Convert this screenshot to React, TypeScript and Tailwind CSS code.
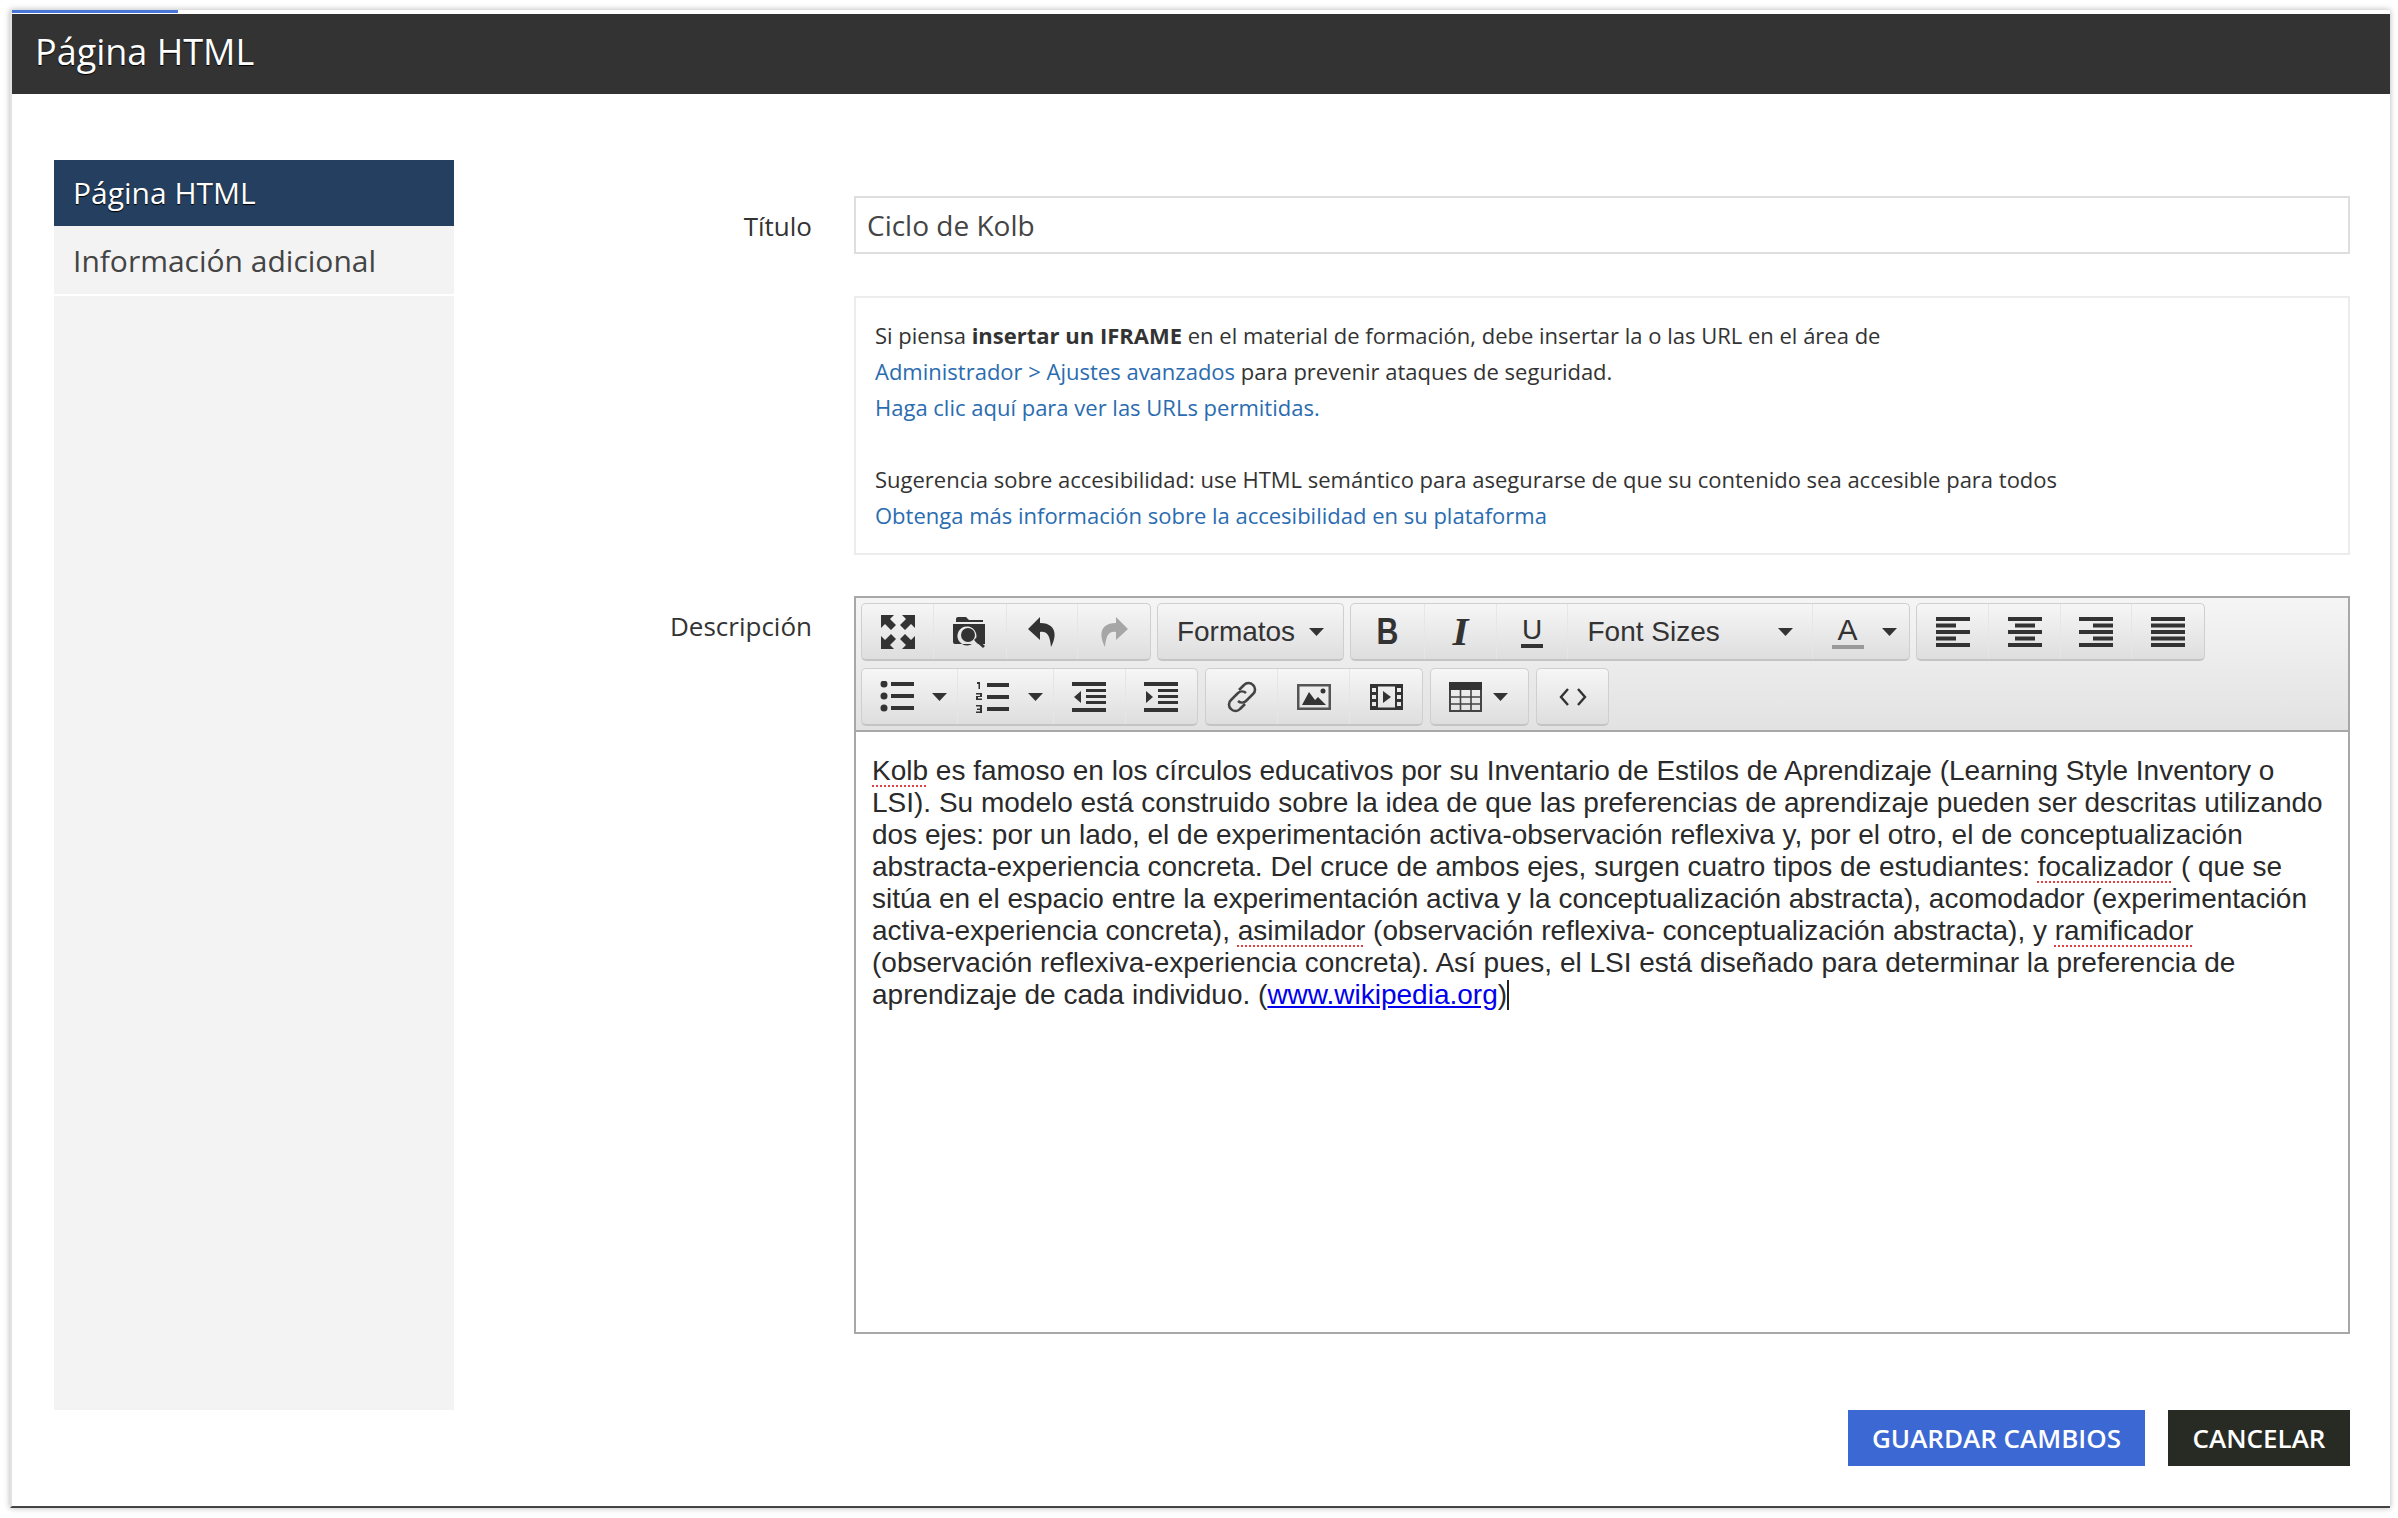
import React from "react";

const Caret: React.FC = () => (
    <svg width="15" height="8" viewBox="0 0 15 8" className="shrink-0"><path d="M0 0h15L7.5 8z" fill="#333" /></svg>
);

const Ico: React.FC<{ w?: number; h?: number; children: React.ReactNode; fill?: string }> = ({ w = 34, h = 32, children, fill = "#333" }) => (
    <svg width={w} height={h} viewBox={`0 0 ${w} ${h}`} fill={fill} className="shrink-0">{children}</svg>
);

const Fullscreen = () => (
    <Ico h={34}>
        <path d="M0 0h13l-4 4 6 6-5 5-6-6-4 4z" />
        <path d="M34 0H21l4 4-6 6 5 5 6-6 4 4z" />
        <path d="M0 34h13l-4-4 6-6-5-5-6 6-4-4z" />
        <path d="M34 34H21l4-4-6-6 5-5 6 6 4-4z" />
    </Ico>
);

const Browse = () => (
    <Ico>
        <path d="M3 6V3q0-2 2-2h8l3 3h14v2z" />
        <path fillRule="evenodd" d="M0 8h32v20h-7l-3-3a9.5 9.5 0 1 0-3 3H2q-2 0-2-2zM15 12a7 7 0 1 1 0 14 7 7 0 0 1 0-14z" />
        <path d="M21 24l2-2 9 8-2 2z" />
    </Ico>
);

const Undo = () => (
    <Ico w={28}>
        <path d="M12 1 0 13l12 11v-8c6-1 10 2 11 15 7-13 4-24-11-24z" />
    </Ico>
);

const Redo = () => (
    <Ico w={28} fill="#a6a6a6">
        <path d="M16 1 28 13 16 24v-8C10 15 6 18 5 31-2 18 1 7 16 7z" />
    </Ico>
);

const Align: React.FC<{ rows: [number, number][] }> = ({ rows }) => (
    <Ico h={30}>
        {rows.map(([x, w], i) => <rect key={i} x={x} y={i * 6.5} width={w} height="4" />)}
    </Ico>
);

const Bullets = () => (
    <Ico>
        {[3, 15, 27].map((y) => (
            <g key={y}>
                <circle cx="4" cy={y} r="3.5" />
                <rect x="11" y={y - 2} width="23" height="4" />
            </g>
        ))}
    </Ico>
);

const Numbers = () => (
    <Ico>
        <path d="M1 1h3v7H2.500V3H1zM0 12h6v4H2v1.500h4V19H0v-4h4v-1.500H0zM0 24h6v8H0v-1.500h4V29H1v-1.500h3v-2H0z" />
        {[4, 16, 28].map((y) => <rect key={y} x="11" y={y - 2} width="22" height="4" />)}
    </Ico>
);

const Outdent = () => (
    <Ico h={30}>
        <rect width="34" height="4" />
        <rect x="14" y="7" width="20" height="3" />
        <rect x="14" y="13" width="20" height="3" />
        <rect x="14" y="19" width="20" height="3" />
        <rect y="26" width="34" height="4" />
        <path d="M9 9v12L2 15z" />
    </Ico>
);

const Indent = () => (
    <Ico h={30}>
        <rect width="34" height="4" />
        <rect x="14" y="7" width="20" height="3" />
        <rect x="14" y="13" width="20" height="3" />
        <rect x="14" y="19" width="20" height="3" />
        <rect y="26" width="34" height="4" />
        <path d="M2 9v12l7-6z" />
    </Ico>
);

const LinkIco = () => (
    <svg width="34" height="34" viewBox="0 0 34 34" fill="none" stroke="#444" strokeWidth="2.6" className="shrink-0">
        <path d="M14 10l5-5a6 6 0 0 1 9 0 6 6 0 0 1 0 9l-7 7a6 6 0 0 1-8 0" />
        <path d="M20 24l-5 5a6 6 0 0 1-9 0 6 6 0 0 1 0-9l7-7a6 6 0 0 1 8 0" />
    </svg>
);

const ImageIco = () => (
    <Ico h={26} fill="#333">
        <path fillRule="evenodd" fill="#555" d="M0 0h34v26H0zM2.500 2.500v21h29v-21z" />
        <path d="M5 21l7-13 6 8 3-3 8 8z" />
        <circle cx="26" cy="7" r="2.500" />
    </Ico>
);

const Media = () => (
    <Ico w={33} h={26}>
        <path fillRule="evenodd" d="M0 0h33v26H0zM8 2.500v21h17v-21zM2 4v4h4V4zM2 11v4h4v-4zM2 18v4h4v-4zM27 4v4h4V4zM27 11v4h4v-4zM27 18v4h4v-4z" />
        <path d="M13 7v12l8-6z" />
    </Ico>
);

const TableIco = () => (
    <svg width="33" height="30" viewBox="0 0 33 30" fill="none" stroke="#444" strokeWidth="1.6" className="shrink-0">
        <rect x="1" y="1" width="31" height="28" strokeWidth="2" />
        <rect x="0" y="0" width="33" height="8" fill="#333" stroke="none" />
        <path d="M1 15h31M1 22h31M11.500 8v21M22 8v21" />
    </svg>
);

const CodeIco = () => (
    <svg width="28" height="20" viewBox="0 0 28 20" fill="none" stroke="#333" strokeWidth="2.4" className="shrink-0">
        <path d="M9 2 2 10l7 8M19 2l7 8-7 8" />
    </svg>
);

const Btn: React.FC<{ w: string; last?: boolean; gap?: string; children: React.ReactNode }> = ({ w, last, gap = "gap-[14px]", children }) => (
    <div className={`${w} h-full flex items-center justify-center ${gap} ${last ? "" : "border-r border-[#e6e6e6]"}`}>{children}</div>
);

const Group: React.FC<{ children: React.ReactNode }> = ({ children }) => (
    <div className="flex h-[58px] rounded-[5px] border border-[#cfcfcf] border-b-2 border-b-[#c4c4c4] bg-gradient-to-b from-[#f6f6f6] to-[#dedede]">{children}</div>
);

const Field: React.FC<{ label: string; children: React.ReactNode; labelClass: string }> = ({ label, children, labelClass }) => (
    <div className="flex">
        <label className={`w-[400px] shrink-0 pr-[42px] text-right text-[26px] text-[#333] ${labelClass}`}>{label}</label>
        <div className="w-[1496px]">{children}</div>
    </div>
);

const Misspelled: React.FC<{ children: React.ReactNode }> = ({ children }) => (
    <span className="underline decoration-dotted decoration-2 decoration-[#e04040] underline-offset-[5px]">{children}</span>
);

const ALeft: [number, number][] = [[0, 34], [0, 20], [0, 34], [0, 20], [0, 34]];
const ACenter: [number, number][] = [[0, 34], [7, 20], [0, 34], [7, 20], [0, 34]];
const ARight: [number, number][] = [[0, 34], [14, 20], [0, 34], [14, 20], [0, 34]];
const AFull: [number, number][] = [[0, 34], [0, 34], [0, 34], [0, 34], [0, 34]];

export default function App() {
    return (
        <div className="min-h-screen bg-white pl-[10px] pt-[10px] font-['Open_Sans',sans-serif]">
            <div className="w-[2380px] h-[1498px] bg-white border-l-[2px] border-[#e2e2e2] border-b-[2px] border-b-[#444] shadow-[0_0_6px_rgba(0,0,0,0.3)]">
                <div className="h-[4px]">
                    <div className="h-[3px] w-[166px] bg-[#4a78d8]" />
                </div>
                <div className="h-[80px] bg-[#333333] flex items-center pl-[23px] pb-[4px] text-[36px] text-white [text-shadow:0_1px_1px_#000]">
                    Página HTML
                </div>

                <div className="flex pl-[42px] pt-[66px]">
                    {/* side nav */}
                    <div className="w-[400px] h-[1250px] bg-[#f3f3f3] text-[30px] shrink-0">
                        <div className="h-[66px] bg-[#243f60] text-white flex items-center pl-[19px] pb-[2px] [text-shadow:0_1px_1px_#000]">Página HTML</div>
                        <div className="mt-[1px] h-[69px] flex items-center pl-[19px] text-[#444] border-b-[2px] border-white">Información adicional</div>
                    </div>

                    <div className="pt-[36px] flex flex-col">
                        <Field label="Título" labelClass="pt-[11px]">
                            <div className="h-[58px] border-[2px] border-[#dedede] flex items-center pl-[11px] text-[28px] text-[#444]">Ciclo de Kolb</div>
                        </Field>

                        <div className="mt-[42px]">
                            <Field label="" labelClass="">
                                <div className="h-[259px] border-[2px] border-[#ececec] pt-[19px] pl-[19px] text-[22px] leading-[36px] text-[#333]">
                                    <p>Si piensa <b>insertar un IFRAME</b> en el material de formación, debe insertar la o las URL en el área de</p>
                                    <p><a className="text-[#2b6cb0]">Administrador &gt; Ajustes avanzados</a> para prevenir ataques de seguridad.</p>
                                    <p><a className="text-[#2b6cb0]">Haga clic aquí para ver las URLs permitidas.</a></p>
                                    <p className="mt-[36px]">Sugerencia sobre accesibilidad: use HTML semántico para asegurarse de que su contenido sea accesible para todos</p>
                                    <p><a className="text-[#2b6cb0]">Obtenga más información sobre la accesibilidad en su plataforma</a></p>
                                </div>
                            </Field>
                        </div>

                        <div className="mt-[41px]">
                            <Field label="Descripción" labelClass="pt-[11px]">
                                <div className="h-[738px] border-[2px] border-[#a8a8a8] flex flex-col font-['Liberation_Sans',sans-serif]">
                                    <div className="h-[134px] shrink-0 border-b-[2px] border-[#a8a8a8] bg-gradient-to-b from-[#f5f5f5] to-[#e2e2e2] pl-[5px] pt-[5px] flex flex-col gap-[7px] text-[28px] text-[#333]">
                                        <div className="flex gap-[6px]">
                                            <Group>
                                                <Btn w="w-[72px]"><Fullscreen /></Btn>
                                                <Btn w="w-[73px]"><Browse /></Btn>
                                                <Btn w="w-[71px]"><Undo /></Btn>
                                                <Btn w="w-[72px]" last><Redo /></Btn>
                                            </Group>
                                            <Group>
                                                <Btn w="w-[185px]" last>Formatos <Caret /></Btn>
                                            </Group>
                                            <Group>
                                                <Btn w="w-[74px]"><span className="text-[37px] font-bold scale-x-[0.82]">B</span></Btn>
                                                <Btn w="w-[72px]"><span className="text-[41px] italic font-bold font-['Liberation_Serif',serif]">I</span></Btn>
                                                <Btn w="w-[71px]"><span className="text-[28px] leading-[28px] px-[1px] border-b-[4px] border-[#333]">U</span></Btn>
                                                <Btn w="w-[245px]"><span className="w-[176px]">Font Sizes</span><Caret /></Btn>
                                                <Btn w="w-[96px]" gap="gap-[18px] pl-[6px]" last><span className="w-[32px] text-center text-[30px] leading-[30px] border-b-[4px] border-[#999]">A</span><Caret /></Btn>
                                            </Group>
                                            <Group>
                                                <Btn w="w-[72px]"><Align rows={ALeft} /></Btn>
                                                <Btn w="w-[72px]"><Align rows={ACenter} /></Btn>
                                                <Btn w="w-[71px]"><Align rows={ARight} /></Btn>
                                                <Btn w="w-[72px]" last><Align rows={AFull} /></Btn>
                                            </Group>
                                        </div>
                                        <div className="flex gap-[7px]">
                                            <Group>
                                                <Btn w="w-[96px]" gap="gap-[18px] pl-[8px]"><Bullets /><Caret /></Btn>
                                                <Btn w="w-[96px]" gap="gap-[18px] pl-[8px]"><Numbers /><Caret /></Btn>
                                                <Btn w="w-[72px]" gap="pr-[2px]"><Outdent /></Btn>
                                                <Btn w="w-[71px]" gap="pr-[2px]" last><Indent /></Btn>
                                            </Group>
                                            <Group>
                                                <Btn w="w-[72px]"><LinkIco /></Btn>
                                                <Btn w="w-[72px]"><ImageIco /></Btn>
                                                <Btn w="w-[72px]" last><Media /></Btn>
                                            </Group>
                                            <Group>
                                                <Btn w="w-[97px]" last gap="gap-[11px] pr-[2px]"><TableIco /><Caret /></Btn>
                                            </Group>
                                            <Group>
                                                <Btn w="w-[71px]" last><CodeIco /></Btn>
                                            </Group>
                                        </div>
                                    </div>
                                    <div className="bg-white pt-[23px] pl-[16px] text-[28px] leading-[32px] text-[#2a2a2a]">
                                        <p>
                                            <Misspelled>Kolb</Misspelled> es famoso en los círculos educativos por su Inventario de Estilos de Aprendizaje (Learning Style Inventory o<br />
                                            LSI). Su modelo está construido sobre la idea de que las preferencias de aprendizaje pueden ser descritas utilizando<br />
                                            dos ejes: por un lado, el de experimentación activa-observación reflexiva y, por el otro, el de conceptualización<br />
                                            abstracta-experiencia concreta. Del cruce de ambos ejes, surgen cuatro tipos de estudiantes: <Misspelled>focalizador</Misspelled> ( que se<br />
                                            sitúa en el espacio entre la experimentación activa y la conceptualización abstracta), acomodador (experimentación<br />
                                            activa-experiencia concreta), <Misspelled>asimilador</Misspelled> (observación reflexiva- conceptualización abstracta), y <Misspelled>ramificador</Misspelled><br />
                                            (observación reflexiva-experiencia concreta). Así pues, el LSI está diseñado para determinar la preferencia de<br />
                                            aprendizaje de cada individuo. (<a className="text-[#0000ee] underline">www.wikipedia.org</a>)<span className="inline-block w-[2px] h-[30px] bg-[#222] align-text-bottom" />
                                        </p>
                                    </div>
                                </div>
                            </Field>
                        </div>

                        {/* footer buttons */}
                        <div className="mt-[76px] flex justify-end gap-[23px] text-[26px] font-semibold text-white">
                            <button className="w-[297px] h-[56px] bg-[#3b68d2]">GUARDAR CAMBIOS</button>
                            <button className="w-[182px] h-[56px] bg-[#282b24]">CANCELAR</button>
                        </div>
                    </div>
                </div>
            </div>
        </div>
    );
}
